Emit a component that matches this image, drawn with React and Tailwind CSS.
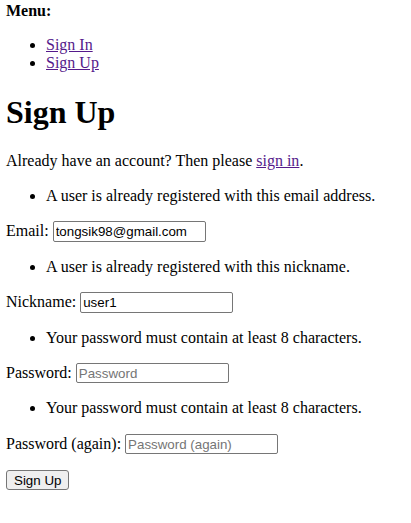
export default function App() {
  const link = "text-[#551a8b] underline";
  const input =
    "inline-block align-baseline font-['Liberation_Sans',Arial,sans-serif] text-[13.33px] leading-[normal] text-black bg-white border border-[#767676] rounded-[2px] px-[2px] py-[1px] w-[153px] h-[20.5px] placeholder:text-[#757575]";
  return (
    <div className="font-['Liberation_Serif','Times_New_Roman',serif] text-[16px] leading-[1.15] text-black bg-white min-h-screen px-[6px] pt-[1.5px]">
      <div>
        <strong className="font-bold">Menu:</strong>
      </div>
      <ul className="list-disc pl-10 my-4">
        <li>
          <a href="#" className={link}>Sign In</a>
        </li>
        <li>
          <a href="#" className={link}>Sign Up</a>
        </li>
      </ul>
      <h1 className="text-[32px] font-bold my-[21.44px]">Sign Up</h1>
      <p className="my-4">
        Already have an account? Then please <a href="#" className={link}>sign in</a>.
      </p>
      <form onSubmit={(e) => e.preventDefault()}>
        <ul className="list-disc pl-10 my-4">
          <li>A user is already registered with this email address.</li>
        </ul>
        <p className="my-4">
          <label>Email:</label>{" "}
          <input type="email" className={input} defaultValue="tongsik98@gmail.com" />
        </p>
        <ul className="list-disc pl-10 my-4">
          <li>A user is already registered with this nickname.</li>
        </ul>
        <p className="my-4">
          <label>Nickname:</label>{" "}
          <input type="text" className={input} defaultValue="user1" />
        </p>
        <ul className="list-disc pl-10 my-4">
          <li>Your password must contain at least 8 characters.</li>
        </ul>
        <p className="my-4">
          <label>Password:</label>{" "}
          <input type="password" className={input} placeholder="Password" />
        </p>
        <ul className="list-disc pl-10 my-4">
          <li>Your password must contain at least 8 characters.</li>
        </ul>
        <p className="my-4">
          <label>Password (again):</label>{" "}
          <input type="password" className={input} placeholder="Password (again)" />
        </p>
        <button
          type="submit"
          className="inline-block font-['Liberation_Sans',Arial,sans-serif] text-[13.33px] leading-[normal] text-black bg-[#efefef] border border-[#767676] rounded-[3px] px-[7px] py-[1px] h-[20px]"
        >
          Sign Up
        </button>
      </form>
    </div>
  );
}
